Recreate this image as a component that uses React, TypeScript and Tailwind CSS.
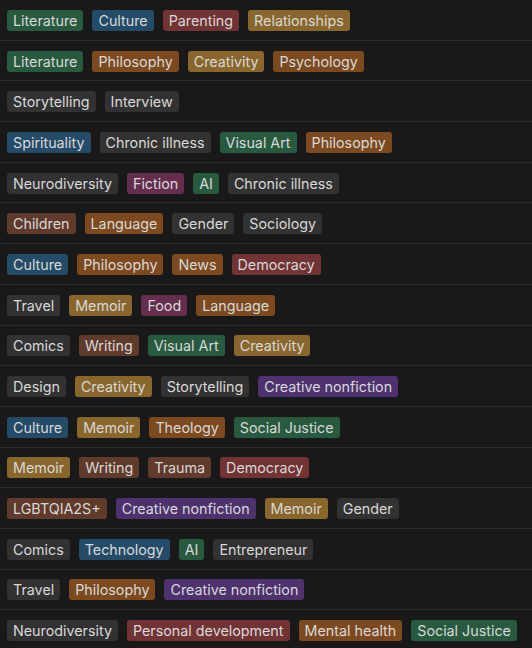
const colors = {
  gray: "bg-[#323232]",
  brown: "bg-[#603b2c]",
  orange: "bg-[#7c4a1e]",
  yellow: "bg-[#89662c]",
  green: "bg-[#275a3f]",
  blue: "bg-[#244b68]",
  purple: "bg-[#4d326e]",
  pink: "bg-[#652e4e]",
  red: "bg-[#713333]",
}

type Color = keyof typeof colors

const rows: [string, Color][][] = [
  [["Literature", "green"], ["Culture", "blue"], ["Parenting", "red"], ["Relationships", "yellow"]],
  [["Literature", "green"], ["Philosophy", "orange"], ["Creativity", "yellow"], ["Psychology", "orange"]],
  [["Storytelling", "gray"], ["Interview", "gray"]],
  [["Spirituality", "blue"], ["Chronic illness", "gray"], ["Visual Art", "green"], ["Philosophy", "orange"]],
  [["Neurodiversity", "gray"], ["Fiction", "pink"], ["AI", "green"], ["Chronic illness", "gray"]],
  [["Children", "brown"], ["Language", "orange"], ["Gender", "gray"], ["Sociology", "gray"]],
  [["Culture", "blue"], ["Philosophy", "orange"], ["News", "orange"], ["Democracy", "red"]],
  [["Travel", "gray"], ["Memoir", "yellow"], ["Food", "pink"], ["Language", "orange"]],
  [["Comics", "gray"], ["Writing", "brown"], ["Visual Art", "green"], ["Creativity", "yellow"]],
  [["Design", "gray"], ["Creativity", "yellow"], ["Storytelling", "gray"], ["Creative nonfiction", "purple"]],
  [["Culture", "blue"], ["Memoir", "yellow"], ["Theology", "orange"], ["Social Justice", "green"]],
  [["Memoir", "yellow"], ["Writing", "brown"], ["Trauma", "brown"], ["Democracy", "red"]],
  [["LGBTQIA2S+", "brown"], ["Creative nonfiction", "purple"], ["Memoir", "yellow"], ["Gender", "gray"]],
  [["Comics", "gray"], ["Technology", "blue"], ["AI", "green"], ["Entrepreneur", "gray"]],
  [["Travel", "gray"], ["Philosophy", "orange"], ["Creative nonfiction", "purple"]],
  [["Neurodiversity", "gray"], ["Personal development", "red"], ["Mental health", "orange"], ["Social Justice", "green"]],
]

export default function App() {
  return (
    <div className="min-h-screen w-[532px] bg-[#191919] font-['Inter',sans-serif] text-[14.3px] text-[#d8d8d8]">
      {rows.map((tags, i) => (
        <div key={i} className="flex h-[40.7px] items-center gap-[9px] border-b border-[#2c2c2c] px-[7px] pt-px">
          {tags.map(([label, color], j) => (
            <span key={j} className={`${colors[color]} h-[21px] rounded-[3px] px-[6px] leading-[21px] whitespace-nowrap`}>
              {label}
            </span>
          ))}
        </div>
      ))}
    </div>
  )
}
